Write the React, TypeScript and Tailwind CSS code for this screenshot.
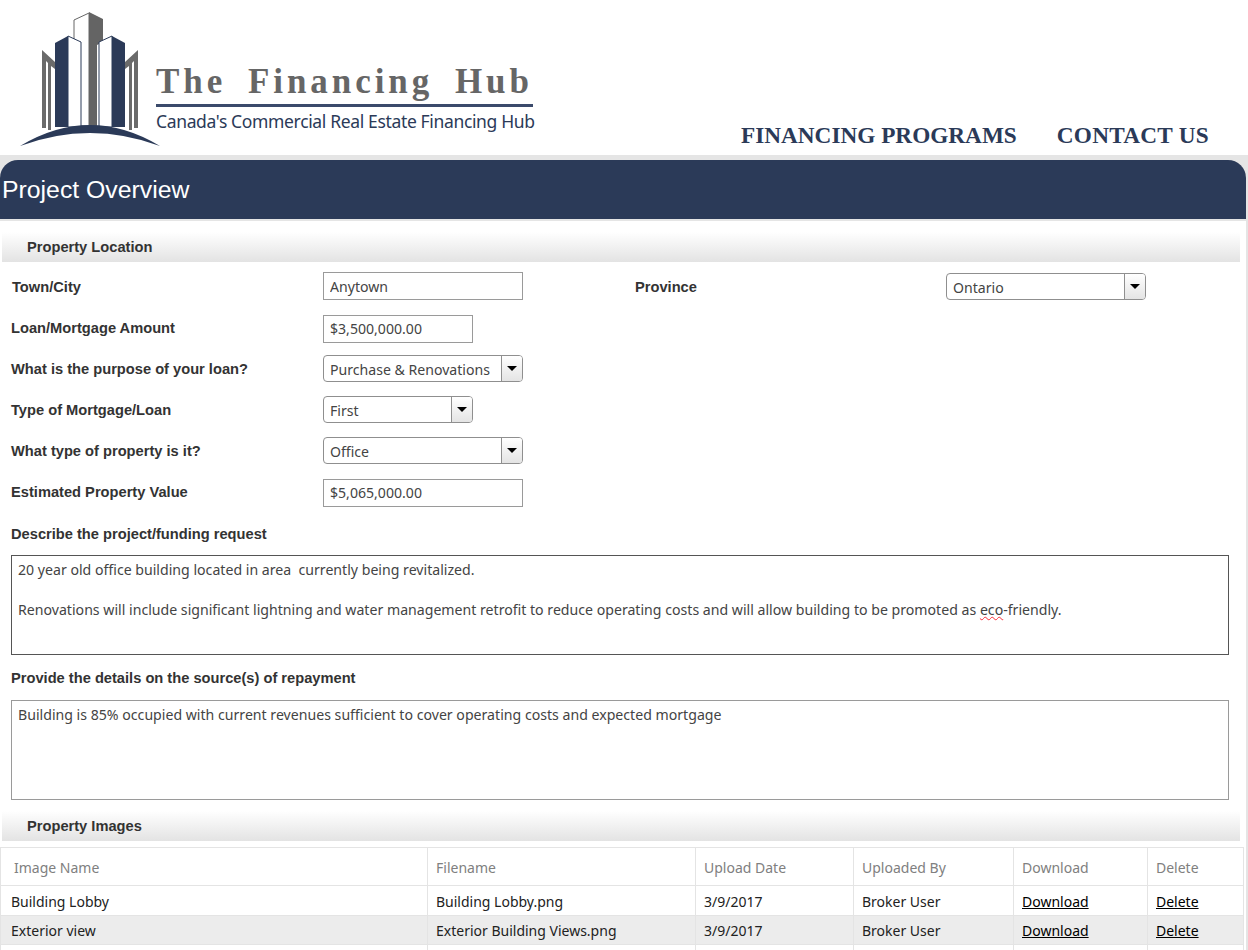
const ui = "font-['Noto_Sans','Open_Sans',sans-serif]";

function Logo() {
  return (
    <div className="flex w-[560px] shrink-0">
      <svg width="165" height="155" viewBox="0 0 165 155" className="shrink-0">
        <path d="M74 58V20L89 13V126H74Z" fill="#fff" stroke="#666" strokeWidth="1" />
        <path d="M89 12L103 19V42L97 45V126H89Z" fill="#646464" />
        <path d="M55 43L68 36V127H55Z" fill="#2b3a58" />
        <path d="M68 36L81 42V127H68Z" fill="#fff" stroke="#2b3a58" strokeWidth="1" />
        <path d="M112 36L125 43V127H112Z" fill="#2b3a58" />
        <path d="M112 36L99 42V127H112Z" fill="#fff" stroke="#2b3a58" strokeWidth="1" />
        <path d="M42 50L55 62V69L51 66V130H48V63L46 61V128H42Z" fill="#6a6a6a" />
        <path d="M138 50L125 62V69L129 66V130H132V63L134 61V128H138Z" fill="#6a6a6a" />
        <path d="M20 146Q90 104 160 146Q90 120 20 146Z" fill="#2b3a58" />
      </svg>
      <div className="ml-[-9px] w-[377px] pt-[62px]">
        <div className="border-b-[3px] border-[#3b4a6b] pb-[2px] font-['Liberation_Serif',serif] text-[35px] leading-[40px] font-bold tracking-[3.95px] whitespace-nowrap text-[#666] [word-spacing:9px]">
          The Financing Hub
        </div>
        <div className="mt-[1px] font-['Noto_Sans',sans-serif] text-[17.5px] leading-[26px] tracking-[-0.35px] whitespace-nowrap text-[#2b3a58]">
          Canada's Commercial Real Estate Financing Hub
        </div>
      </div>
    </div>
  );
}

function Header() {
  return (
    <header className="flex h-[155px] bg-white">
      <Logo />
      <nav className="ml-[181px] flex gap-[40px] pt-[119px] font-['Liberation_Serif',serif] text-[23.25px] leading-[32px] font-bold whitespace-nowrap text-[#2b3a58]">
        <a>FINANCING PROGRAMS</a>
        <a className="tracking-[0.25px]">CONTACT US</a>
      </nav>
    </header>
  );
}

function SectionBar({ title }: { title: string }) {
  return (
    <div className="mr-[6px] ml-[2px] flex h-[30px] items-center bg-gradient-to-b from-white to-[#e3e3e3] pl-[25px] text-[14.67px] font-bold text-[#333]">
      {title}
    </div>
  );
}

function Label({ children }: { children: React.ReactNode }) {
  return <span className="text-[14.67px] font-bold text-[#333]">{children}</span>;
}

function TextBox({ value, width }: { value: string; width: string }) {
  return (
    <input
      readOnly
      defaultValue={value}
      className={`h-[28px] ${width} border border-[#9a9a9a] px-[6px] text-[14.1px] text-[#444] outline-none ${ui}`}
    />
  );
}

function Select({ value, width }: { value: string; width: string }) {
  return (
    <div className={`flex h-[27px] ${width} items-center rounded-[4px] border border-[#8f8f8f] text-[14.1px] text-[#444] ${ui}`}>
      <span className="flex-1 pt-[2px] pl-[6px] whitespace-nowrap">{value}</span>
      <span className="flex h-full w-[21px] items-center justify-center rounded-r-[3px] border-l border-[#8f8f8f] bg-gradient-to-b from-white to-[#e4e4e4]">
        <span className="h-0 w-0 border-x-[5px] border-t-[5px] border-x-transparent border-t-black" />
      </span>
    </div>
  );
}

function Row({ label, children }: { label: string; children: React.ReactNode }) {
  return (
    <div className="flex h-[41px] items-center pl-[11px]">
      <div className="w-[312px]">
        <Label>{label}</Label>
      </div>
      {children}
    </div>
  );
}

function Notes({ dark, children }: { dark?: boolean; children: React.ReactNode }) {
  return (
    <div
      className={`mr-[17px] ml-[11px] h-[100px] border px-[6px] pt-[4px] text-[14.13px] leading-[20px] text-[#444] ${ui} ${
        dark ? "border-[#555]" : "border-[#9a9a9a]"
      }`}
    >
      {children}
    </div>
  );
}

const files = [
  ["Building Lobby", "Building Lobby.png"],
  ["Exterior view", "Exterior Building Views.png"],
];

function FileTable() {
  const cell = "border border-[#e4e4e4]";
  const head = `${cell} h-[38px] pt-[2px] text-left font-normal text-[#808080]`;
  return (
    <table className={`mt-[6px] w-[1243px] table-fixed border-collapse text-[14px] ${ui}`}>
      <colgroup>
        <col className="w-[427px]" />
        <col className="w-[268px]" />
        <col className="w-[158px]" />
        <col className="w-[160px]" />
        <col className="w-[134px]" />
        <col className="w-[96px]" />
      </colgroup>
      <thead>
        <tr>
          <th className={`${head} pl-[13px]`}>Image Name</th>
          <th className={`${head} pl-[8px]`}>Filename</th>
          <th className={`${head} pl-[8px]`}>Upload Date</th>
          <th className={`${head} pl-[8px]`}>Uploaded By</th>
          <th className={`${head} pl-[8px]`}>Download</th>
          <th className={`${head} pl-[8px]`}>Delete</th>
        </tr>
      </thead>
      <tbody className="text-[#222]">
        {files.map(([name, file], i) => (
          <tr key={name} className={i === 1 ? "h-[29px] bg-[#ececec]" : "h-[30px] bg-white [&>td]:pt-[2px]"}>
            <td className={`${cell} pl-[10px]`}>{name}</td>
            <td className={`${cell} pl-[8px]`}>{file}</td>
            <td className={`${cell} pl-[8px]`}>3/9/2017</td>
            <td className={`${cell} pl-[8px]`}>Broker User</td>
            <td className={`${cell} pl-[8px] text-black underline`}>Download</td>
            <td className={`${cell} pl-[8px] text-black underline`}>Delete</td>
          </tr>
        ))}
        <tr className="h-[29px]">
          {[0, 1, 2, 3, 4, 5].map((n) => (
            <td key={n} className={cell} />
          ))}
        </tr>
      </tbody>
    </table>
  );
}

export default function App() {
  return (
    <div className="h-[950px] w-[1248px] overflow-hidden bg-[#e5e5e5] font-['Liberation_Sans',Arial,sans-serif]">
      <Header />
      <main className="pt-[5px] pr-[2px]">
        <div className="flex h-[59px] items-center rounded-t-[18px] bg-[#2b3a58] pl-[2px] text-[24.8px] text-white">
          Project Overview
        </div>
        <div className="mt-[2px] h-[800px] bg-white pt-[11px]">
          <SectionBar title="Property Location" />
          <div className="flex h-[45px] items-start pt-[10px] pl-[12px]">
            <div className="w-[311px] pt-[3px]">
              <Label>Town/City</Label>
            </div>
            <TextBox value="Anytown" width="w-[200px]" />
            <div className="ml-[112px] w-[311px] pt-[3px]">
              <Label>Province</Label>
            </div>
            <div className="mt-[1px]">
              <Select value="Ontario" width="w-[200px]" />
            </div>
          </div>
          <Row label="Loan/Mortgage Amount">
            <TextBox value="$3,500,000.00" width="mt-[2px] w-[150px]" />
          </Row>
          <Row label="What is the purpose of your loan?">
            <Select value="Purchase & Renovations" width="w-[200px]" />
          </Row>
          <Row label="Type of Mortgage/Loan">
            <Select value="First" width="w-[150px]" />
          </Row>
          <Row label="What type of property is it?">
            <Select value="Office" width="w-[200px]" />
          </Row>
          <Row label="Estimated Property Value">
            <TextBox value="$5,065,000.00" width="mt-[2px] w-[200px]" />
          </Row>
          <div className="flex h-[43px] items-center pl-[11px]">
            <Label>Describe the project/funding request</Label>
          </div>
          <Notes dark>
            20 year old office building located in area&nbsp; currently being revitalized.
            <br />
            <br />
            Renovations will include significant lightning and water management retrofit to reduce operating costs and
            will allow building to be promoted as{" "}
            <span className="underline decoration-red-500 decoration-wavy decoration-1">eco</span>-friendly.
          </Notes>
          <div className="flex h-[45px] items-center pl-[11px]">
            <Label>Provide the details on the source(s) of repayment</Label>
          </div>
          <Notes>Building is 85% occupied with current revenues sufficient to cover operating costs and expected mortgage</Notes>
          <div className="mt-[11px]">
            <SectionBar title="Property Images" />
          </div>
          <FileTable />
        </div>
      </main>
    </div>
  );
}
